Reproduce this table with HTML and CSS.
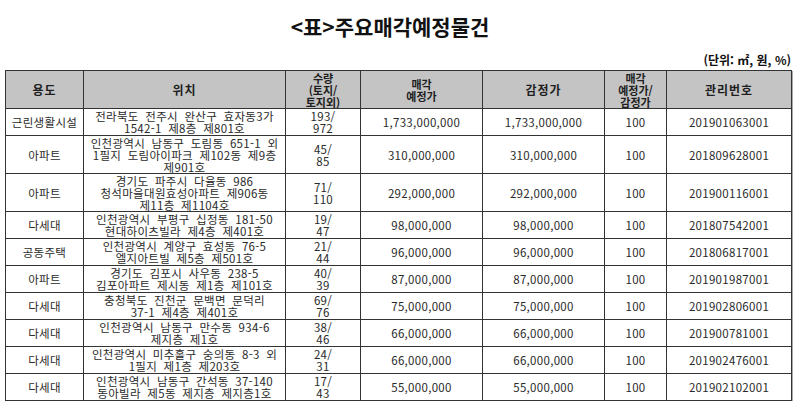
FILE: index.html
```html
<!DOCTYPE html>
<html lang="ko">
<head>
<meta charset="utf-8">
<link rel="stylesheet" href="styles.css">
</head>
<body>
<div class="page">
  <h1 class="title">&lt;표&gt;주요매각예정물건</h1>
  <div class="unit">(단위: ㎡, 원, %)</div>
  <table class="sheet">
    <colgroup>
      <col class="c1"><col class="c2"><col class="c3"><col class="c4"><col class="c5"><col class="c6"><col class="c7">
    </colgroup>
    <thead>
      <tr>
        <th class="wide">용도</th>
        <th class="wide">위치</th>
        <th>수량<br>(토지/<br>토지외)</th>
        <th>매각<br>예정가</th>
        <th class="wide">감정가</th>
        <th>매각<br>예정가/<br>감정가</th>
        <th class="wide">관리번호</th>
      </tr>
    </thead>
    <tbody>
      <tr class="r2"><td>근린생활시설</td><td>전라북도 전주시 완산구 효자동3가<br>1542-1 제8층 제801호</td><td>193/<br>972</td><td>1,733,000,000</td><td>1,733,000,000</td><td>100</td><td>201901063001</td></tr>
      <tr class="r3"><td>아파트</td><td>인천광역시 남동구 도림동 651-1 외<br>1필지 도림아이파크 제102동 제9층<br>제901호</td><td>45/<br>85</td><td>310,000,000</td><td>310,000,000</td><td>100</td><td>201809628001</td></tr>
      <tr class="r3"><td>아파트</td><td>경기도 파주시 다율동 986<br>청석마을대원효성아파트 제906동<br>제11층 제1104호</td><td>71/<br>110</td><td>292,000,000</td><td>292,000,000</td><td>100</td><td>201900116001</td></tr>
      <tr class="r2"><td>다세대</td><td>인천광역시 부평구 십정동 181-50<br>현대하이츠빌라 제4층 제401호</td><td>19/<br>47</td><td>98,000,000</td><td>98,000,000</td><td>100</td><td>201807542001</td></tr>
      <tr class="r2"><td>공동주택</td><td>인천광역시 계양구 효성동 76-5<br>엘지아트빌 제5층 제501호</td><td>21/<br>44</td><td>96,000,000</td><td>96,000,000</td><td>100</td><td>201806817001</td></tr>
      <tr class="r2"><td>아파트</td><td>경기도 김포시 사우동 238-5<br>김포아파트 제시동 제1층 제101호</td><td>40/<br>39</td><td>87,000,000</td><td>87,000,000</td><td>100</td><td>201901987001</td></tr>
      <tr class="r2"><td>다세대</td><td>충청북도 진천군 문백면 문덕리<br>37-1 제4층 제401호</td><td>69/<br>76</td><td>75,000,000</td><td>75,000,000</td><td>100</td><td>201902806001</td></tr>
      <tr class="r2"><td>다세대</td><td>인천광역시 남동구 만수동 934-6<br>제지층 제1호</td><td>38/<br>46</td><td>66,000,000</td><td>66,000,000</td><td>100</td><td>201900781001</td></tr>
      <tr class="r2"><td>다세대</td><td>인천광역시 미추홀구 숭의동 8-3 외<br>1필지 제1층 제203호</td><td>24/<br>31</td><td>66,000,000</td><td>66,000,000</td><td>100</td><td>201902476001</td></tr>
      <tr class="r2"><td>다세대</td><td>인천광역시 남동구 간석동 37-140<br>동아빌라 제5동 제지층 제지층1호</td><td>17/<br>43</td><td>55,000,000</td><td>55,000,000</td><td>100</td><td>201902102001</td></tr>
    </tbody>
  </table>
</div>
</body>
</html>
```

FILE: styles.css
```css
html, body {
  margin: 0;
  padding: 0;
  background: #ffffff;
}

body {
  font-family: "Noto Sans CJK KR", "Noto Sans", sans-serif;
  color: #2a2a2a;
}

.page {
  width: 786px;
  padding: 0 9px 0 5px;
}

.title {
  margin: 0;
  padding: 14px 16px 0 0;
  height: 24px;
  line-height: 24px;
  font-size: 21px;
  font-weight: 700;
  text-align: center;
  color: #111;
}

.unit {
  margin-top: 15px;
  height: 14px;
  line-height: 14px;
  font-size: 12px;
  font-weight: 700;
  text-align: right;
  color: #111;
}

.sheet {
  margin-top: 3px;
  width: 786px;
  table-layout: fixed;
  border-collapse: collapse;
  border: 1px solid #222;
  box-shadow: 1px 1px 0 #aaa;
}

.c1 { width: 78px; }
.c2 { width: 202px; }
.c3 { width: 75px; }
.c4 { width: 122px; }
.c5 { width: 122px; }
.c6 { width: 62px; }
.c7 { width: 125px; }

.sheet th {
  background: #c4c4c4;
  border: 1px solid #333;
  height: 37px;
  padding: 0;
  font-size: 11px;
  line-height: 12px;
  font-weight: 700;
  color: #1e1e1e;
  text-align: center;
  vertical-align: middle;
}

.sheet th.wide {
  font-size: 12px;
  letter-spacing: 1px;
}

.sheet td {
  border: 1px solid #333;
  padding: 0 1px;
  font-size: 11.5px;
  line-height: 12px;
  text-align: center;
  vertical-align: middle;
  white-space: nowrap;
  word-spacing: 3px;
  letter-spacing: 0.3px;
  color: #2a2a2a;
  overflow: hidden;
}

.sheet tr.r2 td {
  height: 26px;
}

.sheet tr.r3 td {
  height: 37px;
}
```
